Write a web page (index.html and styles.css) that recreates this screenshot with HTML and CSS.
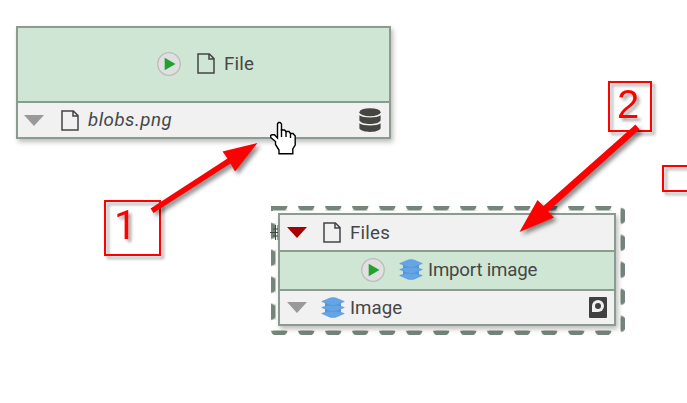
FILE: index.html
```html
<!DOCTYPE html>
<html lang="en">
<head>
<meta charset="utf-8">
<title>Node graph</title>
<link rel="stylesheet" href="styles.css">
</head>
<body>
<svg class="defs" width="0" height="0" aria-hidden="true">
  <symbol id="file" viewBox="0 0 18 21"><path d="M1 1H12.400L17 5.600V20H1ZM12 1.200V6H16.800" fill="none" stroke="#444" stroke-width="1.500"/></symbol>
  <symbol id="run" viewBox="0 0 24 24"><circle cx="12" cy="12" r="11.300" fill="#e0e0e0" stroke="#bcbcbc" stroke-width="1.300"/><path d="M7.700 5.700L18.500 12 7.700 18.300Z" fill="#20a32c"/></symbol>
  <symbol id="layers" viewBox="0 0 24 21"><path d="M4 5V16L12 19 20 16V5Z" fill="#5795d8"/><g fill="#65a5e6" stroke="#5393d8" stroke-width=".5"><path d="M.7 16.500L7 14.300H17L23.300 16.500 15 20.200Q12 21 9 20.200Z"/><path d="M.7 10.500L7 8.300H17L23.300 10.500 15 14.200Q12 15 9 14.200Z"/><path d="M.7 4.500L9 1Q12 .2 15 1L23.300 4.500 15 8.200Q12 9 9 8.200Z"/></g></symbol>
  <symbol id="arrow" viewBox="0 0 20 11"><path d="M0 0H20L10 11Z" fill="currentColor"/></symbol>
</svg>
<main class="canvas">
  <section class="node node-file">
    <div class="row action"><svg class="run"><use href="#run"/></svg><svg class="file"><use href="#file"/></svg><span class="label t-file">File</span></div>
    <div class="row slot"><svg class="toggle"><use href="#arrow"/></svg><svg class="file"><use href="#file"/></svg><span class="label name">blobs.png</span>
      <svg class="database" viewBox="0 0 22 24"><g fill="#454542"><ellipse cx="11" cy="4.200" rx="10.600" ry="4"/><path d="M.4 7.200C4 10.200 18 10.200 21.600 7.200V12.500C19 17.300 3 17.300 .4 12.500Z"/><path d="M.4 15.200C4 18.200 18 18.200 21.600 15.200V20.500C19 25 3 25 .4 20.500Z"/></g></svg>
    </div>
  </section>
  <svg class="selection" viewBox="0 0 358 134">
    <defs>
      <pattern id="dash-x" width="27" height="4.500" patternUnits="userSpaceOnUse"><path d="M0 0H16.500Q16 3.500 13.500 4.500H3Q.5 3.500 0 0Z" fill="#75857a"/></pattern>
      <pattern id="dash-y" width="4.500" height="27" patternUnits="userSpaceOnUse"><path d="M0 0V16.500Q3.500 16 4.500 14V2.500Q3.500 .5 0 0Z" fill="#75857a"/></pattern>
    </defs>
    <rect width="341" height="4.500" fill="url(#dash-x)" transform="translate(1 1)"/>
    <rect width="341" height="4.500" fill="url(#dash-x)" transform="translate(1 125.500)"/>
    <rect width="4.500" height="98" fill="url(#dash-y)" transform="translate(1 17.500)"/>
    <rect width="4.500" height="125" fill="url(#dash-y)" transform="translate(350.500 2.500)"/>
    <path d="M1 1H3V6H1Z" fill="#75857a"/>
    <path d="M0 27.500H9M5.500 20V35M8 20V35M3 24H9M3 31H9" stroke="#444" fill="none"/>
  </svg>
  <section class="node node-import">
    <div class="row input"><svg class="toggle open"><use href="#arrow"/></svg><svg class="file"><use href="#file"/></svg><span class="label">Files</span></div>
    <div class="row action"><svg class="run"><use href="#run"/></svg><svg class="layers"><use href="#layers"/></svg><span class="label t-import">Import image</span></div>
    <div class="row output"><svg class="toggle"><use href="#arrow"/></svg><svg class="layers"><use href="#layers"/></svg><span class="label t-image">Image</span>
      <svg class="preview" viewBox="0 0 18 21"><rect width="18" height="21" rx="1" fill="#404040"/><path d="M3 15V9a6 6 0 1 1 6 6Z" fill="#f1f1f1"/><circle cx="9" cy="9" r="3" fill="#404040"/></svg>
    </div>
  </section>
  <div class="mark mark-one"><span>1</span></div>
  <div class="mark mark-two"><span>2</span></div>
  <div class="mark mark-edge"></div>
  <svg class="pointers" viewBox="0 0 687 403">
    <g class="arrows" fill="#f00">
      <path d="M150.500 208.500L227.500 158.500 222.500 151.500 257.500 143 235 171.500 230.500 163.500 153.500 213Z"/>
      <path d="M635.500 124.500L543.500 206 537.500 200 519.500 232 554 217.500 548 211.500 639.500 129.500Z"/>
    </g>
    <g fill="#fff" stroke="#000" stroke-width="1.400">
      <path d="M277.500 124L278.500 122.500H280L281.500 124V130H284.500L286 131.500H289L290.500 133.500H293L295.200 136V145L292.800 149V153.700H279V150L275.500 144.500V141.500L270.700 137.500V135.500L272 134.800H274.500L277.500 138Z"/>
      <path d="M281.500 129V137M286 131V137M290.500 133V138" fill="none"/>
    </g>
  </svg>
</main>
</body>
</html>
```
FILE: styles.css
```css
body { margin: 0; background: #fff; font-family: Roboto, sans-serif; }
.defs { position: absolute; }
.canvas { position: relative; width: 687px; height: 403px; overflow: hidden; }
.node { position: absolute; box-sizing: border-box; display: grid; border: 2px solid #8c9b90; background: #f1f1f1; box-shadow: 2px 3px 5px #0004; }
.node-file { left: 16px; top: 26px; width: 375px; height: 113px; grid-template-rows: 75px 1fr; }
.node-import { left: 278px; top: 213px; width: 338px; height: 113px; grid-template-rows: 37px 39px 1fr; }
.row { display: flex; align-items: center; min-width: 0; box-sizing: border-box; padding-left: 6px; }
.action { background: #cfe6d5; border-bottom: 2px solid #8c9b90; padding-bottom: 2px; }
.input { border-bottom: 2px solid #8c9b90; }
.node-file .action { padding-left: 139px; }
.node-import .action { padding-left: 81px; }
.label { font-size: 18.700px; line-height: 24px; color: #464646; white-space: nowrap; margin-left: 9px; letter-spacing: .2px; }
.name { font-style: italic; letter-spacing: .5px; }
.run { width: 24px; height: 24px; margin-right: 16px; flex: none; }
.node-import .run { margin-right: 14px; }
.file { width: 18px; height: 21px; flex: none; }
.layers { width: 24px; height: 21px; flex: none; }
.toggle { width: 20px; height: 11px; flex: none; color: #999; margin-right: 16px; }
.node-file .toggle { margin-right: 17px; }
.node-import .row:not(.action) { padding-left: 7px; }
.node-import .output .toggle { margin-right: 14px; }
.toggle.open { color: #aa0000; }
.label.t-file { margin-left: 9px; padding-top: 1px; }
.label.t-import, .label.t-image { margin-left: 5px; }
.label.t-import { letter-spacing: -.2px; }
.label.t-image { letter-spacing: 0; }
.database { width: 22px; height: 24px; margin-left: auto; margin-right: 8px; }
.preview { width: 18px; height: 21px; margin-left: auto; margin-right: 7px; }
.selection { position: absolute; left: 270px; top: 205px; width: 358px; height: 134px; }
.mark { position: absolute; box-sizing: border-box; border: 2px solid #f00; color: #f00; font: 39px/1 "Liberation Sans", sans-serif; filter: drop-shadow(3px 3px 1.500px #0005); }
.mark span { display: block; }
.mark-one { left: 104px; top: 200px; width: 57px; height: 56px; padding: 4px 0 0 8px; font: 400 40px/1 Roboto, sans-serif; }
.mark-two { left: 608px; top: 81px; width: 44px; height: 51px; padding: 1px 0 0 7px; font-size: 40px; }
.mark-edge { left: 662px; top: 165px; width: 40px; height: 27px; }
.pointers { position: absolute; inset: 0; width: 687px; height: 403px; }
.arrows { filter: drop-shadow(3px 3px 2px #0007); }
```
